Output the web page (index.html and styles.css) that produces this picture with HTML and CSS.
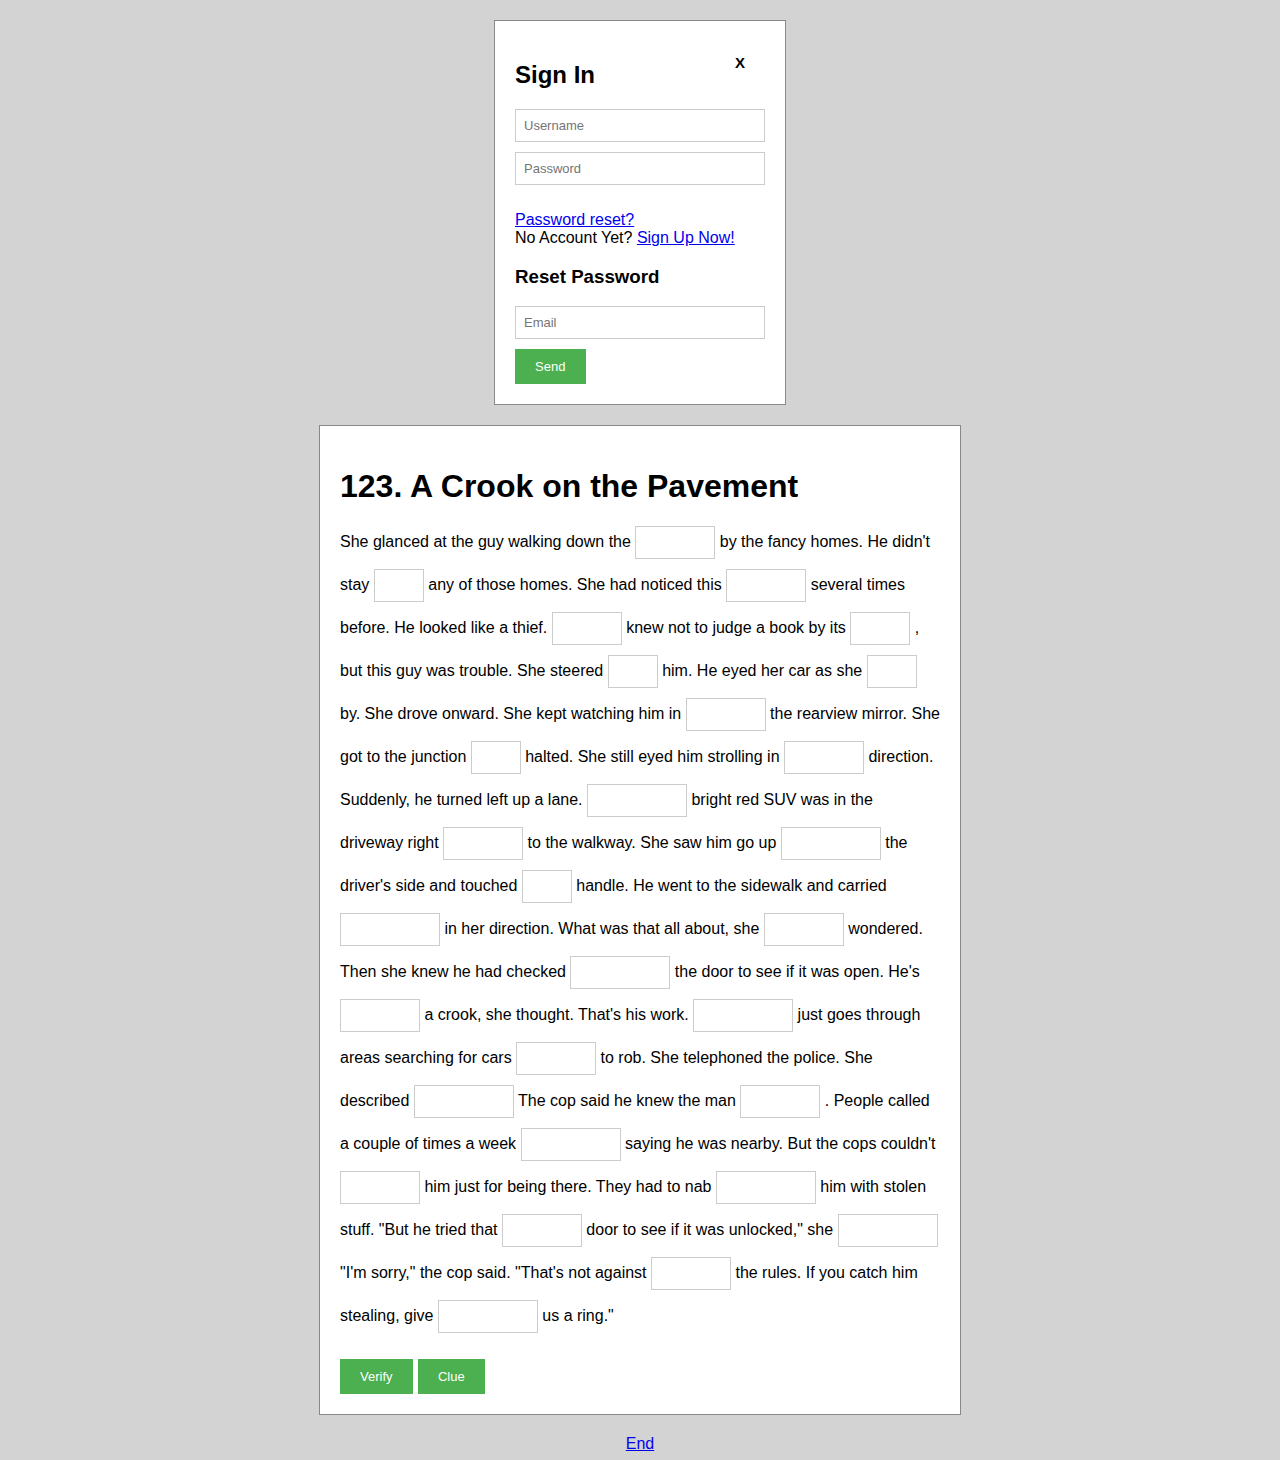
FILE: index.html
```html
<!DOCTYPE html>
<html>
<head>
<meta charset="utf-8">
<title>123. A Crook on the Pavement</title>
<link rel="stylesheet" href="styles.css">
</head>
<body>
<div class="login-box">
  <span class="close">X</span>
  <h2 class="login-title">Sign In</h2>
  <input class="field" type="text" placeholder="Username">
  <input class="field" type="password" placeholder="Password">
  <p class="login-links">
    <a href="#">Password reset?</a><br>
    No Account Yet? <a href="#">Sign Up Now!</a>
  </p>
  <h3 class="reset-title">Reset Password</h3>
  <input class="field" type="email" placeholder="Email">
  <button class="btn btn-send">Send</button>
</div>

<div class="story-box">
  <h1 class="story-title">123. A Crook on the Pavement</h1>
  <p class="story">She glanced at the guy walking down the <input class="blank w80"> by the fancy homes. He didn't stay <input class="blank w50"> any of those homes. She had noticed this <input class="blank w80"> several times before. He looked like a thief. <input class="blank w70"> knew not to judge a book by its <input class="blank w60"> , but this guy was trouble. She steered <input class="blank w50"> him. He eyed her car as she <input class="blank w50"> by. She drove onward. She kept watching him in <input class="blank w80"> the rearview mirror. She got to the junction <input class="blank w50"> halted. She still eyed him strolling in <input class="blank w80"> direction. Suddenly, he turned left up a lane. <input class="blank w100"> bright red SUV was in the driveway right <input class="blank w80"> to the walkway. She saw him go up <input class="blank w100"> the driver's side and touched <input class="blank w50"> handle. He went to the sidewalk and carried <input class="blank w100"> in her direction. What was that all about, she <input class="blank w80"> wondered. Then she knew he had checked <input class="blank w100"> the door to see if it was open. He's <input class="blank w80"> a crook, she thought. That's his work. <input class="blank w100"> just goes through areas searching for cars <input class="blank w80"> to rob. She telephoned the police. She described <input class="blank w100"> The cop said he knew the man <input class="blank w80"> . People called a couple of times a week <input class="blank w100"> saying he was nearby. But the cops couldn't <input class="blank w80"> him just for being there. They had to nab <input class="blank w100"> him with stolen stuff. "But he tried that <input class="blank w80"> door to see if it was unlocked," she <input class="blank w100"> "I'm sorry," the cop said. "That's not against <input class="blank w80"> the rules. If you catch him stealing, give <input class="blank w100"> us a ring."</p>
  <div class="actions"><button class="btn">Verify</button> <button class="btn btn-clue">Clue</button></div>
</div>

<div class="footer"><a href="#">End</a></div>
</body>
</html>
```

FILE: styles.css
```css
html, body {
  margin: 0;
  padding: 0;
}
body {
  background: #d3d3d3;
  font-family: "Liberation Sans", Arial, sans-serif;
  font-size: 16px;
  color: #000;
}
a {
  color: #0000ee;
}
.login-box {
  position: relative;
  width: 250px;
  margin: 20px auto;
  padding: 20px;
  background: #fff;
  border: 1px solid #888;
}
.close {
  position: absolute;
  top: 33px;
  right: 40px;
  font-size: 15px;
  font-weight: bold;
}
.login-title {
  font-size: 24px;
  margin: 20px 0;
}
.field {
  display: block;
  box-sizing: border-box;
  width: 250px;
  height: 33px;
  margin: 0 0 10px 0;
  padding: 8px;
  border: 1px solid #ccc;
  font-family: "Liberation Sans", Arial, sans-serif;
  font-size: 13px;
  outline: none;
}
.field::placeholder {
  color: #757575;
}
.login-links {
  margin: 26px 0 16px 0;
  line-height: 18px;
}
.reset-title {
  font-size: 18.72px;
  margin: 18.72px 0;
}
.btn {
  background: #4caf50;
  color: #fff;
  border: none;
  height: 35px;
  padding: 0 20px;
  font-family: "Liberation Sans", Arial, sans-serif;
  font-size: 13px;
  cursor: pointer;
}
.btn-send {
  padding: 0 21px 0 20px;
}
.story-box {
  width: 600px;
  margin: 20px auto;
  padding: 20px;
  background: #fff;
  border: 1px solid #888;
}
.story-title {
  font-size: 32px;
  margin: 21.44px 0;
}
.story {
  margin: 16px 0;
  line-height: 18px;
}
.blank {
  box-sizing: border-box;
  height: 33px;
  margin: 0 0 10px 0;
  padding: 8px;
  border: 1px solid #ccc;
  font-family: "Liberation Sans", Arial, sans-serif;
  font-size: 13px;
  vertical-align: baseline;
  outline: none;
}
.w50 { width: 50px; }
.w60 { width: 60px; }
.w70 { width: 70px; }
.w80 { width: 80px; }
.w100 { width: 100px; }
.actions {
  font-size: 16px;
}
.btn-clue {
  margin-left: 1px;
}
.footer {
  text-align: center;
  margin: 20px 0;
}
```
